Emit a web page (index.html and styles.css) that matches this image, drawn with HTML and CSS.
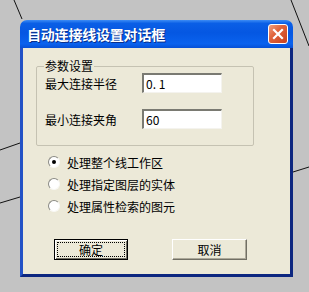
FILE: index.html
```html
<!DOCTYPE html>
<html lang="zh-CN">
<head>
    <meta charset="UTF-8">
    <meta name="viewport" content="width=device-width, initial-scale=1.0">
    <title>自动连接线设置对话框</title>
    <link rel="stylesheet" href="styles.css">
</head>
<body>
    <div class="desktop">
        <svg class="cad-lines" width="309" height="292" viewBox="0 0 309 292">
            <line x1="14" y1="0" x2="22" y2="19" />
            <line x1="291" y1="0" x2="309" y2="46" />
            <line x1="0" y1="150" x2="20" y2="143" />
            <line x1="0" y1="203" x2="20" y2="197" />
            <line x1="293" y1="172" x2="309" y2="167" />
        </svg>
        <div class="window">
            <div class="titlebar">
                <span class="title">自动连接线设置对话框</span>
                <span class="close-btn">
                    <svg width="12" height="12" viewBox="0 0 12 12">
                        <path d="M2 2 L10 10 M10 2 L2 10" stroke="#fff" stroke-width="2.2" stroke-linecap="square" />
                    </svg>
                </span>
            </div>
            <div class="client">
                <fieldset class="group">
                    <legend>参数设置</legend>
                    <div class="row">
                        <label for="radius">最大连接半径</label>
                        <input type="text" id="radius" value="0. 1">
                    </div>
                    <div class="row">
                        <label for="angle">最小连接夹角</label>
                        <input type="text" id="angle" value="60">
                    </div>
                </fieldset>
                <div class="options">
                    <div class="option"><span class="radio checked"></span>处理整个线工作区</div>
                    <div class="option"><span class="radio"></span>处理指定图层的实体</div>
                    <div class="option"><span class="radio"></span>处理属性检索的图元</div>
                </div>
                <div class="buttons">
                    <button type="button" class="btn default"><span>确定</span></button>
                    <button type="button" class="btn">取消</button>
                </div>
            </div>
        </div>
    </div>
</body>
</html>
```

FILE: styles.css
```css
body {
    margin: 0;
    padding: 0;
    background-color: #c3c3c3;
    font-family: "Noto Sans CJK SC", "Liberation Sans", sans-serif;
    font-size: 12px;
    color: #000;
}
.desktop {
    position: relative;
    width: 309px;
    height: 292px;
    overflow: hidden;
}
.cad-lines {
    position: absolute;
    left: 0;
    top: 0;
}
.cad-lines line {
    stroke: #111;
    stroke-width: 1;
}
.window {
    position: relative;
    margin: 20px 0 0 20px;
    width: 273px;
}
.titlebar {
    height: 28px;
    display: flex;
    align-items: center;
    justify-content: space-between;
    padding: 0 5px 0 7px;
    border-radius: 7px 7px 0 0;
    background: linear-gradient(#3d8cf5 0%, #0a5fe6 12%, #0557e2 45%, #0a62ee 85%, #0650d6 100%);
}
.title {
    color: #fff;
    font-weight: bold;
    font-size: 14px;
    letter-spacing: -0.2px;
    text-shadow: 1px 1px 0 #0a2f8a;
}
.close-btn {
    width: 18px;
    height: 18px;
    display: flex;
    align-items: center;
    justify-content: center;
    border: 1px solid #fff;
    border-radius: 3px;
    background: linear-gradient(135deg, #f0a080 0%, #e0643c 40%, #c8401e 100%);
}
.client {
    height: 229px;
    box-sizing: border-box;
    background-color: #ece9d8;
    border-left: 3px solid #2352c6;
    border-right: 3px solid #0c2680;
    border-bottom: 3px solid #0c2680;
    padding-top: 11px;
}
.group {
    margin: 0 0 0 13px;
    width: 218px;
    box-sizing: border-box;
    padding: 0 8px 16px 8px;
    border: 1px solid #c5c2b2;
    border-radius: 2px;
}
.group legend {
    padding: 0 1px;
    margin-left: -1px;
    line-height: 14px;
}
.row {
    display: flex;
    align-items: center;
    height: 20px;
}
.row + .row {
    margin-top: 16px;
}
.row label {
    width: 97px;
}
.row input {
    width: 80px;
    height: 20px;
    box-sizing: border-box;
    padding: 0 2px;
    font-family: "Noto Sans CJK SC", "Liberation Sans", sans-serif;
    font-size: 12px;
    border-top: 2px solid #7a7a72;
    border-left: 2px solid #7a7a72;
    border-bottom: 1px solid #f4f3ee;
    border-right: 1px solid #f4f3ee;
    background: #fff;
    outline: none;
}
.options {
    margin-top: 6px;
    padding-left: 25px;
    display: flex;
    flex-direction: column;
    gap: 2px;
}
.option {
    display: flex;
    align-items: center;
    height: 20px;
    gap: 7px;
}
.radio {
    width: 12px;
    height: 12px;
    box-sizing: border-box;
    border-radius: 50%;
    border: 1px solid;
    border-color: #8a8a84 #f8f8f4 #f8f8f4 #8a8a84;
    background: #fff;
    display: flex;
    align-items: center;
    justify-content: center;
}
.radio.checked::after {
    content: "";
    width: 4px;
    height: 4px;
    border-radius: 50%;
    background: #000;
}
.buttons {
    margin-top: 23px;
    padding-left: 31px;
    display: flex;
    gap: 44px;
}
.btn {
    width: 75px;
    height: 21px;
    padding: 0;
    font-family: "Noto Sans CJK SC", "Liberation Sans", sans-serif;
    font-size: 12px;
    background: #ece9d8;
    border: 1px solid;
    border-color: #fff #716f64 #716f64 #fff;
    box-shadow: inset -1px -1px 0 #aca899;
    color: #000;
}
.btn.default {
    width: 74px;
    border: 1px solid #000;
    box-shadow: inset 1px 1px 0 #fff, inset -1px -1px 0 #716f64;
    padding: 2px;
}
.btn.default span {
    display: flex;
    align-items: center;
    justify-content: center;
    height: 100%;
    border: 1px dotted #000;
    box-sizing: border-box;
}
```
